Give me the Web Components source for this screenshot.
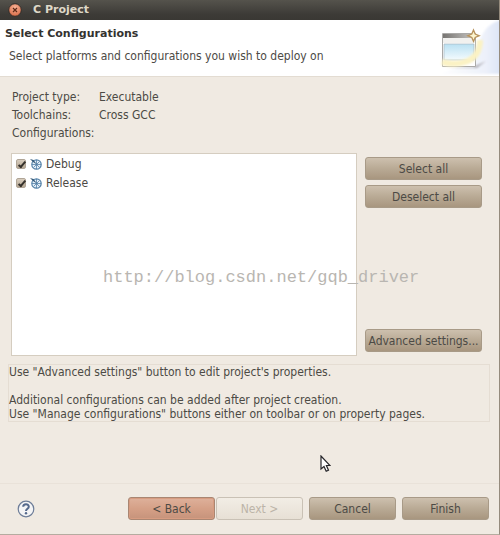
<!DOCTYPE html>
<html lang="en">
<head>
<meta charset="utf-8">
<meta name="viewport" content="width=device-width, initial-scale=1">
<title>C Project</title>
<style>
  body {
    margin: 0;
    background: #f0eae2;
    color: #4c4a45;
    font: 12px/14px "DejaVu Sans Condensed", "DejaVu Sans", sans-serif;
  }
</style>
</head>
<body>
<project-wizard>
  <title-bar slot="title">C Project</title-bar>
  <wizard-header slot="header">
    <span slot="title">Select Configurations</span>
    <span slot="message">Select platforms and configurations you wish to deploy on</span>
  </wizard-header>
  <project-info></project-info>
  <config-picker>
    <config-item>Debug</config-item>
    <config-item>Release</config-item>
    <wizard-button slot="select">Select all</wizard-button>
    <wizard-button slot="select">Deselect all</wizard-button>
    <wizard-button slot="advanced">Advanced settings...</wizard-button>
    <span slot="watermark">http://blog.csdn.net/gqb_driver</span>
  </config-picker>
  <wizard-note>
    <p>Use "Advanced settings" button to edit project's properties.</p>
    <p>Additional configurations can be added after project creation.<br>Use "Manage configurations" buttons either on toolbar or on property pages.</p>
  </wizard-note>
  <wizard-footer slot="footer">
    <wizard-button tone="back">&lt; Back</wizard-button>
    <wizard-button disabled>Next &gt;</wizard-button>
    <wizard-button slot="end">Cancel</wizard-button>
    <wizard-button slot="end">Finish</wizard-button>
  </wizard-footer>
  <mouse-pointer slot="pointer"></mouse-pointer>
</project-wizard>

<script>
class BaseElement extends HTMLElement {
  constructor() {
    super();
    this.attachShadow({ mode: "open" });
  }
  connectedCallback() {
    this.shadowRoot.innerHTML = this.getStyles() + this.getContent();
  }
}

class ProjectWizard extends BaseElement {
  getContent() {
    return `
      <slot name="title"></slot>
      <slot name="header"></slot>
      <main><slot></slot></main>
      <slot name="footer"></slot>
      <slot name="pointer"></slot>
    `;
  }
  getStyles() {
    return `
      <style>
        :host {
          display: flex;
          flex-direction: column;
          position: relative;
          box-sizing: border-box;
          min-height: 100vh;
          border-right: 1px solid #958b7d;
          border-bottom: 1px solid #b5aca0;
        }
        main {
          flex: 1;
          display: flex;
          flex-direction: column;
          padding: 11px 9px 0 8px;
        }
      </style>
    `;
  }
}

class TitleBar extends BaseElement {
  getContent() {
    return `
      <button type="button" aria-label="Close">
        <svg width="14" height="14" viewBox="0 0 14 14">
          <defs>
            <radialGradient id="orb" cx="50%" cy="30%" r="65%">
              <stop offset="0" stop-color="#f8b296"/>
              <stop offset="1" stop-color="#d9704c"/>
            </radialGradient>
          </defs>
          <circle cx="7" cy="7" r="6.300" fill="url(#orb)" stroke="#2f2d2a"/>
          <path d="M5 5l4 4M9 5l-4 4" stroke="#5d2a18" stroke-width="1.200"/>
        </svg>
      </button>
      <h1><slot></slot></h1>
    `;
  }
  getStyles() {
    return `
      <style>
        :host {
          display: flex;
          align-items: center;
          gap: 11px;
          height: 20px;
          padding-left: 8px;
          background: linear-gradient(#55534c, #3d3b37 70%, #3a3834);
          color: #dfd8c8;
        }
        button {
          display: flex;
          padding: 0;
          border: 0;
          background: none;
        }
        h1 {
          margin: 0;
          font: bold 11px/14px "DejaVu Sans", sans-serif;
        }
      </style>
    `;
  }
}

class WizardHeader extends BaseElement {
  getContent() {
    return `
      <div>
        <h2><slot name="title"></slot></h2>
        <p><slot name="message"></slot></p>
      </div>
      <svg width="64" height="56" viewBox="0 0 64 56" aria-hidden="true">
        <defs>
          <linearGradient id="sky" x2="0" y2="1">
            <stop offset="0" stop-color="#b9e0f2"/>
            <stop offset="1" stop-color="#f4fbfe"/>
          </linearGradient>
          <linearGradient id="bar">
            <stop offset="0" stop-color="#777572"/>
            <stop offset="1" stop-color="#c9c7c4"/>
          </linearGradient>
          <linearGradient id="swoosh">
            <stop offset="0" stop-color="#ffffff"/>
            <stop offset=".75" stop-color="#edf1fa"/>
            <stop offset="1" stop-color="#dce4f6"/>
          </linearGradient>
          <filter id="soft" x="-20%" y="-20%" width="140%" height="140%"><feGaussianBlur stdDeviation="1"/></filter>
        </defs>
        <path d="M66 0C55 3 49 9 45 20C40 37 24 49 3 54H66z" fill="url(#swoosh)" filter="url(#soft)"/>
        <path d="M10 47L38 47L51 41L42 48z" fill="#b0afb6" filter="url(#soft)"/>
        <path d="M7.500 13.500h33v33h-33z" fill="#fff" stroke="#aaa9a7"/>
        <path d="M8 14h32v4H8z" fill="url(#bar)"/>
        <path d="M8 18h32v5H8z" fill="#f1f1ef"/>
        <path d="M9 24h30v16H9z" fill="url(#sky)" stroke="#a9b8c0" stroke-width=".7"/>
        <path d="M7 42C22 46 45 44 45 20" fill="none" stroke="#fbf2c4" stroke-width="6" filter="url(#soft)"/>
        <path d="M38.500 10l1.700 4 4 1.700-4 1.700-1.700 4-1.700-4-4-1.700 4-1.700z" fill="#fdf6d0" stroke="#b8935c" stroke-width="1.300"/>
      </svg>
    `;
  }
  getStyles() {
    return `
      <style>
        :host {
          display: flex;
          justify-content: space-between;
          background: #fff;
          border-bottom: 1px solid #e3dcd2;
        }
        div { padding: 7px 0 0 5px; }
        h2 {
          margin: 0;
          color: #34322f;
          font: bold 11px/14px "DejaVu Sans", sans-serif;
        }
        p { margin: 8px 0 0 4px; }
        svg { display: block; }
      </style>
    `;
  }
}

class ProjectInfo extends BaseElement {
  getContent() {
    return `
      <dl>
        <dt>Project type:</dt><dd>Executable</dd>
        <dt>Toolchains:</dt><dd>Cross GCC</dd>
        <dt>Configurations:</dt><dd></dd>
      </dl>
    `;
  }
  getStyles() {
    return `
      <style>
        :host { display: block; }
        dl {
          display: grid;
          grid-template-columns: 87px 1fr;
          margin: 0 4px;
          line-height: 18px;
        }
        dd { margin: 0; }
      </style>
    `;
  }
}

class ConfigPicker extends BaseElement {
  getContent() {
    return `
      <div class="list"><slot></slot></div>
      <div class="side">
        <slot name="select"></slot>
        <div class="advanced"><slot name="advanced"></slot></div>
      </div>
      <div class="watermark"><slot name="watermark"></slot></div>
    `;
  }
  getStyles() {
    return `
      <style>
        :host {
          display: grid;
          grid-template-columns: 1fr 117px;
          gap: 8px;
          position: relative;
          margin: 11px 8px 0 3px;
        }
        .list {
          min-height: 201px;
          border: 1px solid #d5cdc0;
          background: #fff;
        }
        .side {
          display: flex;
          flex-direction: column;
          gap: 5px;
          padding: 4px 0;
        }
        .advanced { margin-top: auto; }
        .watermark {
          position: absolute;
          left: 92px;
          top: 115px;
          color: #b9b6b1;
          font: 17px/20px "Liberation Mono", monospace;
        }
      </style>
    `;
  }
}

class ConfigItem extends BaseElement {
  getContent() {
    return `
      <label>
        <input type="checkbox" checked>
        <svg width="12" height="12" viewBox="0 0 12 12" aria-hidden="true">
          <circle cx="6.500" cy="6.500" r="4.700" fill="#e4eff8" stroke="#5380a7" stroke-width="1.200"/>
          <path d="M6.500 2v9M2 6.500h9M3.500 9.500l6-6M6 6l3.500 3.500" stroke="#5380a7" stroke-width=".8"/>
          <path d="M0 1l3.500 1L7 6.500 3 4z" fill="#315777"/>
        </svg>
        <slot></slot>
      </label>
    `;
  }
  getStyles() {
    return `
      <style>
        :host { display: block; }
        label {
          display: flex;
          align-items: center;
          gap: 4px;
          height: 19px;
          padding-left: 3px;
        }
        input {
          appearance: none;
          box-sizing: border-box;
          width: 10px;
          height: 10px;
          margin: 0 0 0 1px;
          border: 1px solid #b0a596;
          border-radius: 2px;
          background: linear-gradient(#d8cdbe, #b5a793);
        }
        input:checked::before {
          content: "";
          display: block;
          box-sizing: border-box;
          width: 4px;
          height: 8px;
          margin-left: 3px;
          border: solid #35312c;
          border-width: 0 2px 2px 0;
          transform: rotate(40deg);
        }
      </style>
    `;
  }
}

class WizardButton extends BaseElement {
  getContent() {
    return `<button type="button"${this.hasAttribute("disabled") ? " disabled" : ""}><slot></slot></button>`;
  }
  getStyles() {
    return `
      <style>
        :host { display: block; }
        button {
          box-sizing: border-box;
          width: 100%;
          height: 23px;
          padding: 0;
          border: 1px solid #a89a87;
          border-radius: 3px;
          background: linear-gradient(#cdc0ae, #b9aa95 50%, #a8967f);
          color: #4c4a45;
          font: inherit;
          white-space: nowrap;
        }
        :host([tone="back"]) button {
          border-color: #a98672;
          background: linear-gradient(#deb19b, #d5a087 50%, #c6937b);
          box-shadow: inset 0 0 0 1px #d79c81;
        }
        button:disabled {
          border-color: #c9c1b5;
          background: linear-gradient(#f2ede5, #e7e0d5);
          color: #bcb4a8;
        }
      </style>
    `;
  }
}

class WizardNote extends BaseElement {
  getContent() {
    return `<slot></slot>`;
  }
  getStyles() {
    return `
      <style>
        :host {
          display: block;
          margin-top: 8px;
          border: 1px solid #e5ddd3;
        }
        ::slotted(p) { margin: 0 0 14px; }
        ::slotted(p:last-child) { margin: 0; }
      </style>
    `;
  }
}

class WizardFooter extends BaseElement {
  getContent() {
    return `
      <button type="button" aria-label="Help">
        <svg width="18" height="18" viewBox="0 0 18 18">
          <circle cx="9" cy="9" r="7.800" fill="#f4f4f5" stroke="#6d7d98" stroke-width="1.200"/>
          <path d="M6.200 6.800C6.200 3.500 11.800 3.500 11.800 6.700C11.800 8.700 9 8.700 9 11" fill="none" stroke="#55698c" stroke-width="2"/>
          <circle cx="9" cy="13.300" r="1.200" fill="#55698c"/>
        </svg>
      </button>
      <div class="steps"><slot></slot></div>
      <div class="end"><slot name="end"></slot></div>
    `;
  }
  getStyles() {
    return `
      <style>
        :host {
          display: flex;
          align-items: center;
          gap: 6px;
          padding: 13px 10px 14px 17px;
          border-top: 1px solid #e9e2d9;
        }
        button {
          display: flex;
          margin-right: auto;
          padding: 0;
          border: 0;
          background: none;
        }
        div {
          display: grid;
          grid-template-columns: 87px 87px;
        }
        .steps { gap: 1px; }
        .end { gap: 6px; }
      </style>
    `;
  }
}

class MousePointer extends BaseElement {
  getContent() {
    return `
      <svg width="11" height="18" viewBox="0 0 11 18" aria-hidden="true">
        <path d="M1 1v13l3-2.500 2.200 4.700 2.300-1L6.400 10.500H10z" fill="#fff" stroke="#26262a" stroke-width="1.200"/>
      </svg>
    `;
  }
  getStyles() {
    return `
      <style>
        :host {
          position: absolute;
          right: 168px;
          bottom: 61px;
        }
        svg { display: block; }
      </style>
    `;
  }
}

customElements.define("project-wizard", ProjectWizard);
customElements.define("title-bar", TitleBar);
customElements.define("wizard-header", WizardHeader);
customElements.define("project-info", ProjectInfo);
customElements.define("config-picker", ConfigPicker);
customElements.define("config-item", ConfigItem);
customElements.define("wizard-button", WizardButton);
customElements.define("wizard-note", WizardNote);
customElements.define("wizard-footer", WizardFooter);
customElements.define("mouse-pointer", MousePointer);
</script>
</body>
</html>
